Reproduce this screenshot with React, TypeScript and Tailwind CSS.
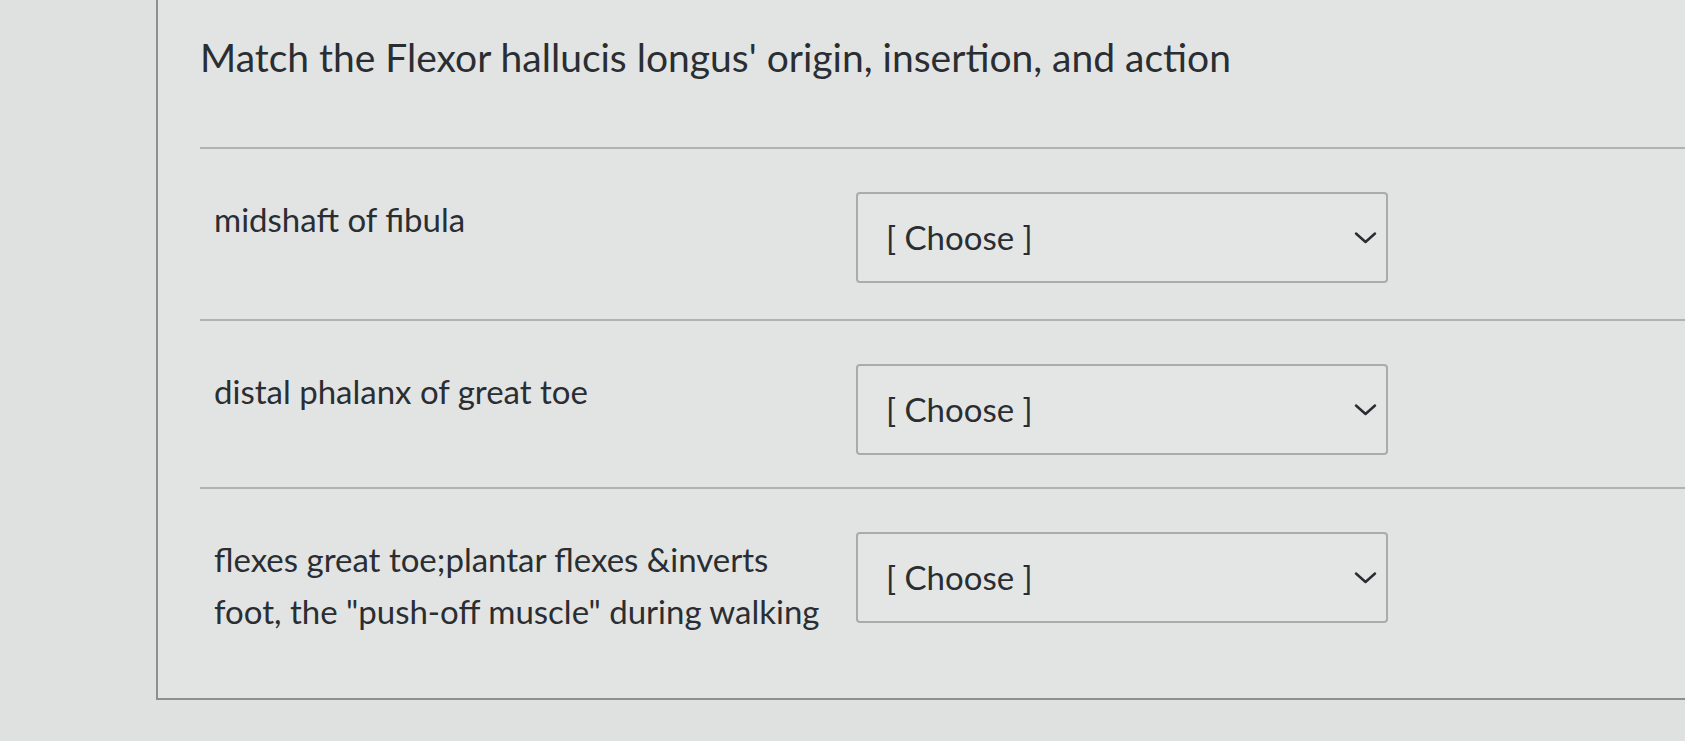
import React from 'react';

const ROWS = [
  { id: 'origin', label: 'midshaft of fibula' },
  { id: 'insertion', label: 'distal phalanx of great toe' },
  { id: 'action', label: 'flexes great toe;plantar flexes &inverts foot, the "push-off muscle" during walking' },
];

const Chevron: React.FC = () => (
  <svg width="23" height="14" viewBox="0 0 23 14" fill="none" className="shrink-0">
    <path d="M2 2.5 L11.5 11 L21 2.5" stroke="#2a2e32" strokeWidth="2.5" strokeLinecap="round" strokeLinejoin="round" />
  </svg>
);

const App: React.FC = () => {
  return (
    <div
      className="w-[1685px] h-[741px] overflow-hidden bg-[#dfe1e0] text-[#2a2e32]"
      style={{ fontFamily: 'Lato, "Open Sans", "Liberation Sans", sans-serif' }}
    >
      <div className="ml-[156px] h-[700px] border-l-2 border-b-2 border-[#8c8f8f] bg-[#e2e4e3]">
        <h1 className="pl-[42px] pt-[34px] text-[39px] leading-[46px] font-normal">
          Match the Flexor hallucis longus' origin, insertion, and action
        </h1>

        <div className="ml-[42px] mt-[67px]">
          {ROWS.map((row, i) => (
            <div
              key={row.id}
              className={`flex items-start border-t-2 border-[#b1b3b3] pt-[43px] ${
                i === 0 ? 'h-[172px]' : i === 1 ? 'h-[168px]' : 'h-[209px]'
              }`}
            >
              <div className="w-[656px] pl-[14px] pr-[20px] pt-[1px] text-[33px] leading-[52px]">
                {row.label}
              </div>
              <button
                type="button"
                className="flex h-[91px] w-[532px] items-center justify-between rounded-[4px] border-2 border-[#a9acac] bg-[#e4e6e5] pl-[28px] pr-[9px] text-[33px] text-[#2a2e32]"
              >
                <span>[ Choose ]</span>
                <Chevron />
              </button>
            </div>
          ))}
        </div>
      </div>
    </div>
  );
};

export default App;
